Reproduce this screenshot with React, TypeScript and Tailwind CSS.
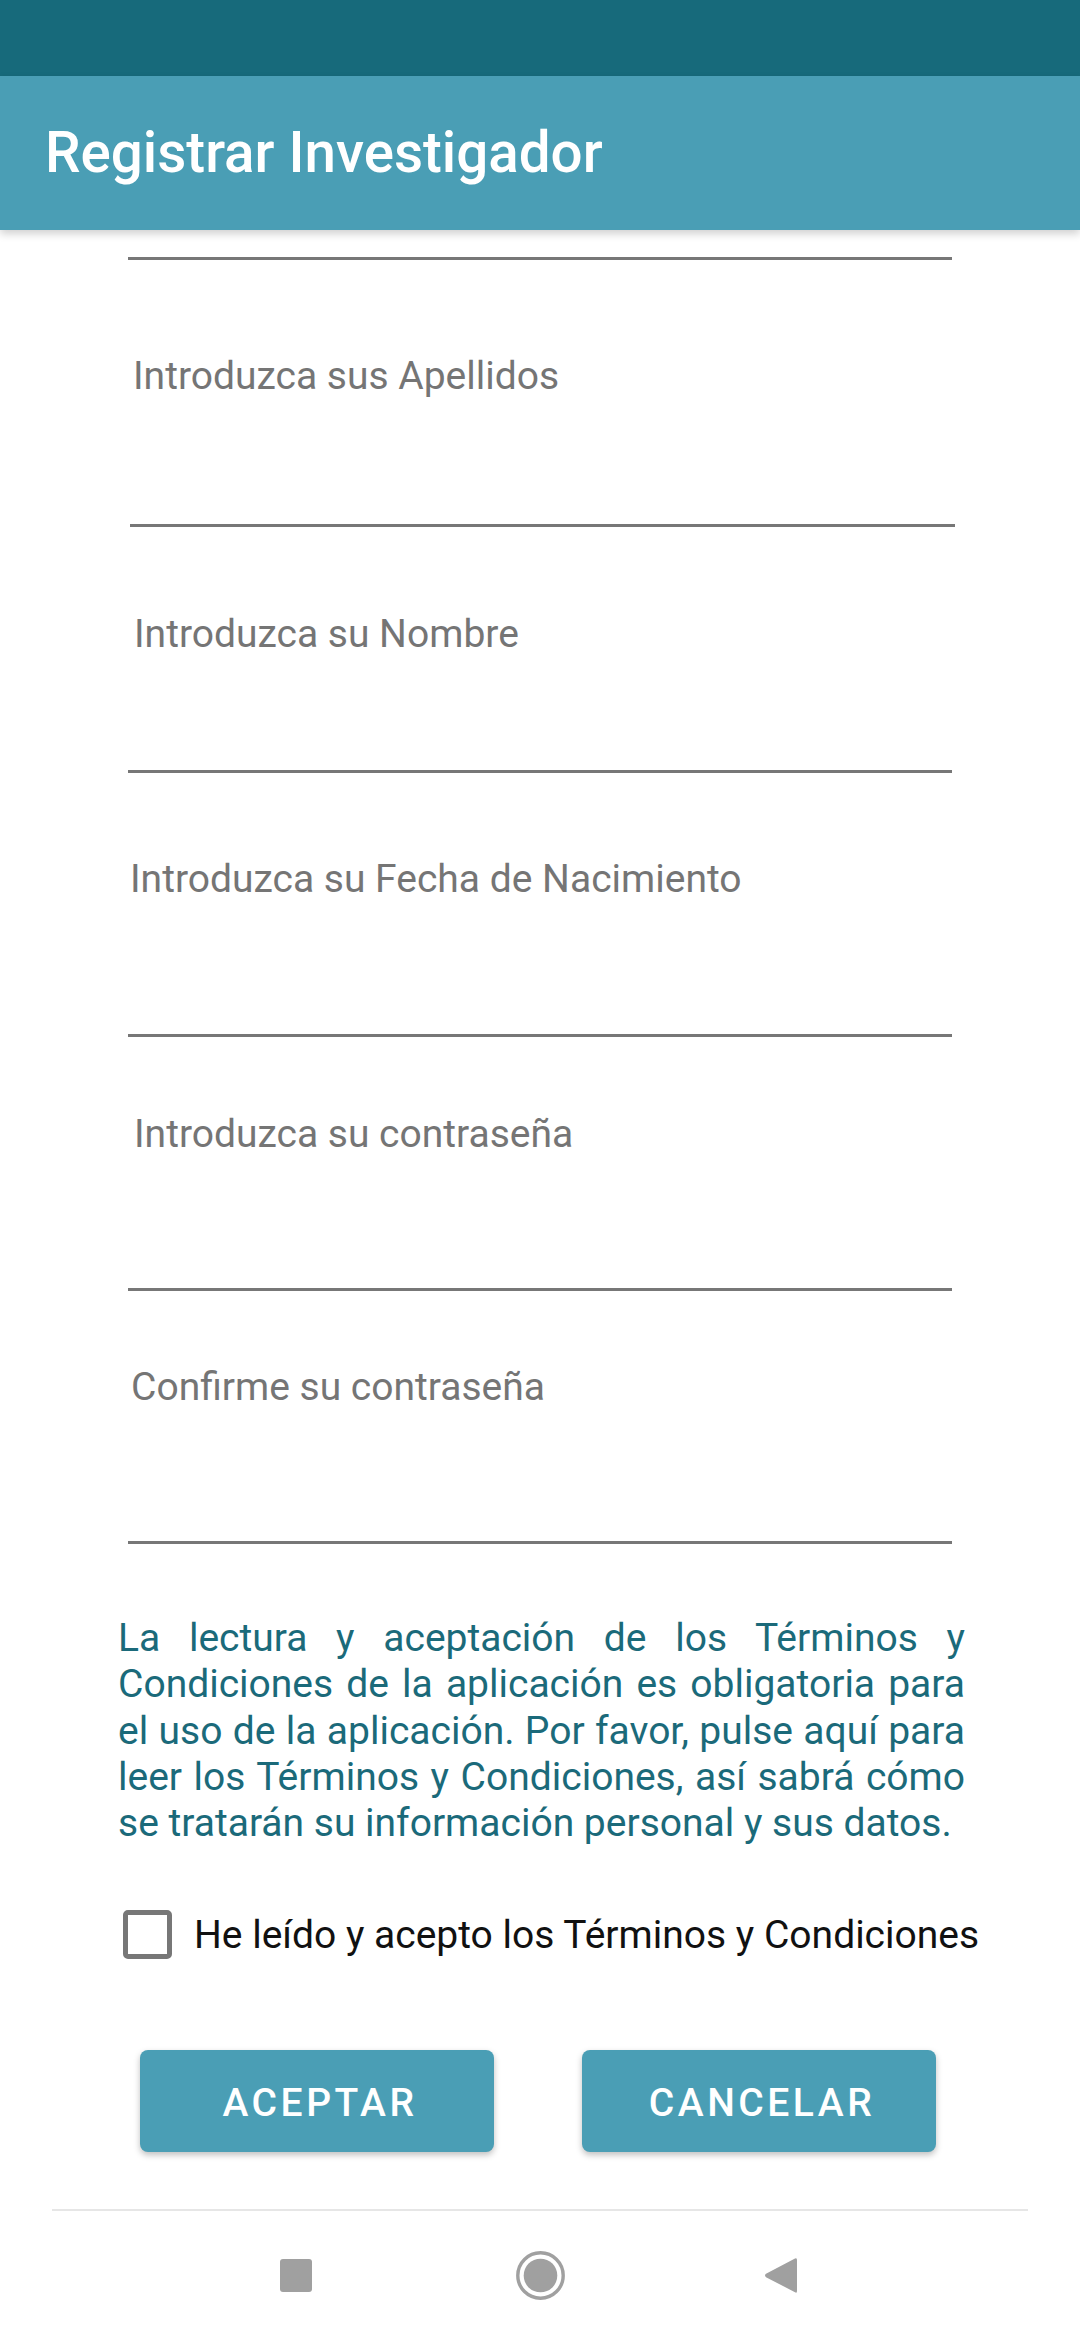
import React from "react";

const fields = [
  { label: "Introduzca sus Apellidos", lmt: "mt-[93px]", lx: "ml-[133px]", linemt: "mt-[125px]", lineX: "ml-[130px] w-[825px]" },
  { label: "Introduzca su Nombre", lmt: "mt-[84px]", lx: "ml-[134px]", linemt: "mt-[113px]", lineX: "ml-[128px] w-[824px]" },
  { label: "Introduzca su Fecha de Nacimiento", lmt: "mt-[83px]", lx: "ml-[130px]", linemt: "mt-[132px]", lineX: "ml-[128px] w-[824px]" },
  { label: "Introduzca su contraseña", lmt: "mt-[74px]", lx: "ml-[134px]", linemt: "mt-[131px]", lineX: "ml-[128px] w-[824px]" },
  { label: "Confirme su contraseña", lmt: "mt-[73px]", lx: "ml-[131px]", linemt: "mt-[131px]", lineX: "ml-[128px] w-[824px]" },
];

const paraLines = [
  "La lectura y aceptación de los Términos y",
  "Condiciones de la aplicación es obligatoria para",
  "el uso de la aplicación. Por favor, pulse aquí para",
  "leer los Términos y Condiciones, así sabrá cómo",
];

export default function App() {
  return (
    <div
      className="w-[1080px] h-[2340px] bg-white flex flex-col overflow-hidden"
      style={{ fontFamily: "Roboto, 'Noto Sans', 'Liberation Sans', sans-serif" }}
    >
      <div className="h-[76px] bg-[#176a7b] shrink-0" />
      <div className="h-[154px] bg-[#4a9eb5] shrink-0 flex items-center pl-[45px] shadow-[0_4px_8px_rgba(0,0,0,0.18)] relative z-10">
        <span className="text-white text-[56.5px] font-medium leading-none">Registrar Investigador</span>
      </div>

      <div className="flex flex-col">
        <div className="mt-[27px] ml-[128px] w-[824px] h-[3px] bg-[#777777]" />
        {fields.map((f) => (
          <div key={f.label} className="flex flex-col">
            <div className={`${f.lmt} ${f.lx} text-[39px] leading-[46px] text-[#757575]`}>{f.label}</div>
            <div className={`${f.linemt} ${f.lineX} h-[3px] bg-[#777777]`} />
          </div>
        ))}

        <div className="mt-[71px] ml-[118px] w-[847px] text-[39px] leading-[46.3px] text-[#1b6a7a]">
          {paraLines.map((l) => (
            <div key={l} className="text-justify [text-align-last:justify] whitespace-nowrap">{l}</div>
          ))}
          <div className="whitespace-nowrap">se tratarán su información personal y sus datos.</div>
        </div>

        <div className="mt-[64px] ml-[123px] flex items-center">
          <div className="w-[49px] h-[49px] rounded-[5px] border-[5px] border-[#777777]" />
          <span className="ml-[22px] text-[39px] leading-[46px] text-[#111111] whitespace-nowrap">
            He leído y acepto los Términos y Condiciones
          </span>
        </div>

        <div className="mt-[91px] ml-[140px] flex gap-[88px]">
          <div className="w-[354px] h-[102px] rounded-[8px] bg-[#4a9eb5] shadow-[0_3px_6px_rgba(0,0,0,0.25)] flex items-center justify-center pl-[6px] pt-[3px] text-white text-[39px] font-medium tracking-[0.09em]">
            ACEPTAR
          </div>
          <div className="w-[354px] h-[102px] rounded-[8px] bg-[#4a9eb5] shadow-[0_3px_6px_rgba(0,0,0,0.25)] flex items-center justify-center pl-[6px] pt-[3px] text-white text-[39px] font-medium tracking-[0.09em]">
            CANCELAR
          </div>
        </div>

        <div className="mt-[57px] ml-[52px] w-[976px] h-[2px] bg-[#e6e6e6]" />
        <div className="h-[128px] flex items-center pl-[280px]">
          <div className="w-[32px] h-[33px] rounded-[3px] bg-[#a0a0a0]" />
          <svg className="ml-[204px]" width="49" height="49" viewBox="0 0 49 49">
            <circle cx="24.5" cy="24.5" r="22.7" fill="none" stroke="#a0a0a0" strokeWidth="3.4" />
            <circle cx="24.5" cy="24.5" r="16.8" fill="#a0a0a0" />
          </svg>
          <svg className="ml-[199px]" width="34" height="37" viewBox="0 0 34 37">
            <path d="M31 1.5 Q33 0.5 33 3 L33 34 Q33 36.5 31 35.2 L2 20.2 Q0 18.5 2 16.8 Z" fill="#a0a0a0" />
          </svg>
        </div>
      </div>
    </div>
  );
}
